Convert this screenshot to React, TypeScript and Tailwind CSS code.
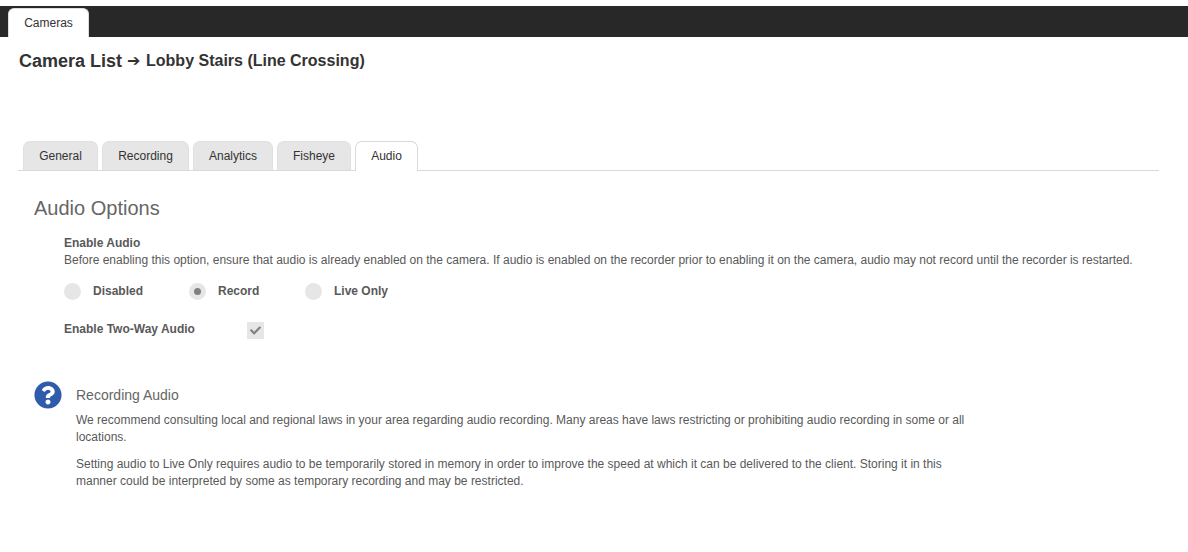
import { FaCheck, FaQuestionCircle } from "react-icons/fa";

const tabs = [
  { label: "General", width: "w-[75px]" },
  { label: "Recording", width: "w-[87px]" },
  { label: "Analytics", width: "w-[80px]" },
  { label: "Fisheye", width: "w-[74px]" },
];

const Radio = ({ label, checked, width }: { label: string; checked?: boolean; width: string }) => (
  <div className={`flex items-center ${width}`}>
    <div className="flex h-[17px] w-[17px] items-center justify-center rounded-full bg-[#e6e6e6]">
      {checked && <div className="h-[7px] w-[7px] rounded-full bg-[#808080]" />}
    </div>
    <span className="ml-[12px] text-[12px] font-bold text-[#595959]">{label}</span>
  </div>
);

export default function App() {
  return (
    <div className="h-[552px] w-[1188px] overflow-hidden bg-white pt-[6px] font-['Liberation_Sans',Arial,sans-serif] text-[#595959]">
      <div className="flex h-[31px] items-end bg-[#282828] pl-[8px]">
        <div className="flex h-[29px] w-[81px] items-center justify-center rounded-t-[6px] border-x border-t border-[#dddddd] bg-white text-[12px] text-[#333333]">
          Cameras
        </div>
      </div>

      <h1 className="mt-[14px] flex h-[20px] items-center pl-[19px] font-bold text-[#333333]">
        <span className="text-[18px]">Camera List</span>
        <span className="ml-[5px] text-[16px] font-normal">➔</span>
        <span className="ml-[6px] text-[16px]">Lobby Stairs (Line Crossing)</span>
      </h1>

      <div className="mt-[70px] ml-[18px] flex h-[30px] w-[1141px] items-end gap-[4px] border-b border-[#d9d9d9] pl-[5px]">
        {tabs.map((tab) => (
          <div
            key={tab.label}
            className={`flex h-[29px] items-center justify-center rounded-t-[7px] border-x border-t border-[#e0e0e0] bg-[#e6e6e6] pb-[1px] text-[12px] text-[#333333] ${tab.width}`}
          >
            {tab.label}
          </div>
        ))}
        <div className="-mb-px flex h-[30px] w-[63px] items-center justify-center rounded-t-[7px] border-x border-t border-[#d9d9d9] bg-white pb-[2px] text-[12px] text-[#333333]">
          Audio
        </div>
      </div>

      <div className="pl-[34px]">
        <h2 className="mt-[25px] text-[20px] leading-[24px] text-[#666666]">Audio Options</h2>

        <div className="mt-[15px] pl-[30px]">
          <div className="text-[12px] leading-[17px] font-bold">Enable Audio</div>
          <p className="text-[12px] leading-[16px] whitespace-nowrap">
            Before enabling this option, ensure that audio is already enabled on the camera. If audio is enabled on the recorder prior to enabling it on the camera, audio may not record until the recorder is restarted.
          </p>
          <div className="mt-[14px] flex h-[18px] items-center">
            <Radio label="Disabled" width="w-[125px]" />
            <Radio label="Record" checked width="w-[116px]" />
            <Radio label="Live Only" width="w-[100px]" />
          </div>
          <div className="mt-[22px] flex h-[17px] items-center">
            <span className="mb-[3px] w-[183px] text-[12px] font-bold">Enable Two-Way Audio</span>
            <div className="flex h-[17px] w-[17px] items-center justify-center bg-[#e6e6e6]">
              <FaCheck className="h-[11px] w-[11px] text-[#808080]" />
            </div>
          </div>
        </div>

        <div className="mt-[42px] flex">
          <FaQuestionCircle className="h-[28px] w-[28px] shrink-0 text-[#2f5bac]" />
          <div className="ml-[14px] w-[900px]">
            <h3 className="mt-[6px] text-[14px] leading-[16px] text-[#666666]">Recording Audio</h3>
            <p className="mt-[9px] text-[12px] leading-[17px]">
              We recommend consulting local and regional laws in your area regarding audio recording. Many areas have laws restricting or prohibiting audio recording in some or all locations.
            </p>
            <p className="mt-[10px] text-[12px] leading-[17px]">
              Setting audio to Live Only requires audio to be temporarily stored in memory in order to improve the speed at which it can be delivered to the client. Storing it in this manner could be interpreted by some as temporary recording and may be restricted.
            </p>
          </div>
        </div>
      </div>
    </div>
  );
}
